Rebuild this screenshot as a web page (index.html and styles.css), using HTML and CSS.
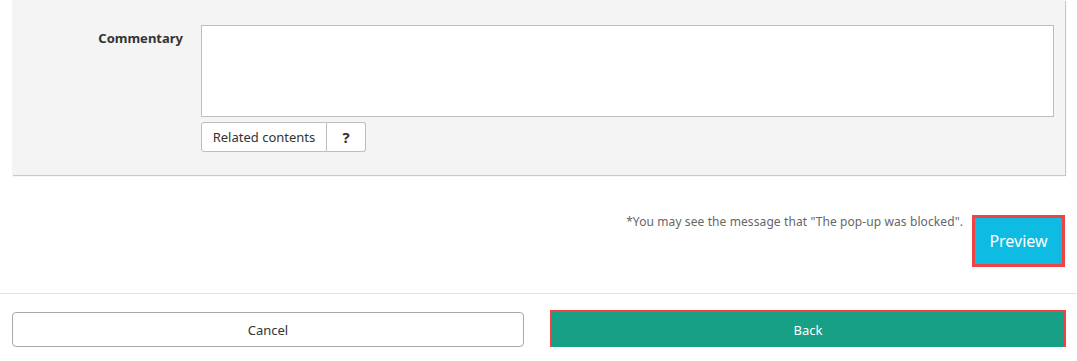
FILE: index.html
```html
<!DOCTYPE html>
<html lang="en">
    <head>
        <title>Edit Commentary</title>
        <meta charset="utf-8">
        <link rel="stylesheet" href="styles.css">
    </head>
    <body>
        <div class="panel">
            <div class="field-row">
                <label class="field-label" for="commentary">Commentary</label>
                <div class="field-body">
                    <textarea id="commentary" class="field-input" name="commentary"></textarea>
                    <div class="btn-group">
                        <button type="button" class="btn-group-item">Related contents</button>
                        <button type="button" class="btn-group-item btn-help">?</button>
                    </div>
                </div>
            </div>
        </div>
        <div class="preview-row">
            <div class="notice">*You may see the message that "The pop-up was blocked".</div>
            <button type="button" class="btn-preview">Preview</button>
        </div>
        <div class="footer">
            <button type="button" class="btn-cancel">Cancel</button>
            <button type="button" class="btn-back">Back</button>
        </div>
    </body>
</html>
```

FILE: styles.css
```css
* {
    font-family: 'Noto Sans', 'Liberation Sans', sans-serif;
    box-sizing: border-box;
}

body {
    margin: 0;
    background-color: white;
    color: #333;
}

.panel {
    margin: 0 12px;
    background-color: #f4f4f4;
    padding: 25px 11px 23px 0;
    box-shadow: 1px 1px 1px #c8c8c8;
}

.field-row {
    display: grid;
    grid-template-columns: 171px 1fr;
    column-gap: 18px;
}

.field-label {
    text-align: right;
    font-size: 13px;
    font-weight: bold;
    padding-top: 4px;
    color: #333;
}

.field-input {
    display: block;
    width: 100%;
    height: 92px;
    border: 1px solid #bdbdbd;
    background-color: white;
    resize: none;
    margin: 0;
}

.btn-group {
    display: flex;
    margin-top: 5px;
}

.btn-group-item {
    height: 30px;
    background-color: white;
    border: 1px solid #bdbdbd;
    font-size: 13px;
    color: #333;
    padding: 0;
    margin: 0;
    white-space: nowrap;
}

.btn-group-item:first-child {
    border-radius: 3px 0 0 3px;
    width: 126px;
}

.btn-help {
    border-left: none;
    border-radius: 0 3px 3px 0;
    width: 39px;
    font-weight: bold;
    font-size: 15px;
}

.preview-row {
    display: flex;
    justify-content: flex-end;
    align-items: flex-start;
    gap: 12px;
    margin-top: 40px;
    padding: 0 15px 0 0;
}

.notice {
    font-size: 12px;
    color: #666;
    margin-top: -2px;
    letter-spacing: 0.1px;
}

.btn-preview {
    width: 87px;
    height: 46px;
    margin-top: 3px;
    background-color: #0dbbe3;
    color: white;
    border: none;
    font-size: 16px;
    outline: 3px solid #f04444;
}

.footer {
    margin-top: 29px;
    border-top: 1px solid #e3e3e3;
    padding: 18px 13px 0 12px;
    display: grid;
    grid-template-columns: 1fr 1fr;
    column-gap: 28px;
}

.btn-cancel {
    height: 35px;
    background-color: white;
    border: 1px solid #aaa;
    border-radius: 4px;
    font-size: 13px;
    color: #333;
}

.btn-back {
    height: 35px;
    background-color: #17a086;
    color: white;
    border: none;
    font-size: 13px;
    outline: 2px solid #f04444;
    outline-offset: 0;
}
```
